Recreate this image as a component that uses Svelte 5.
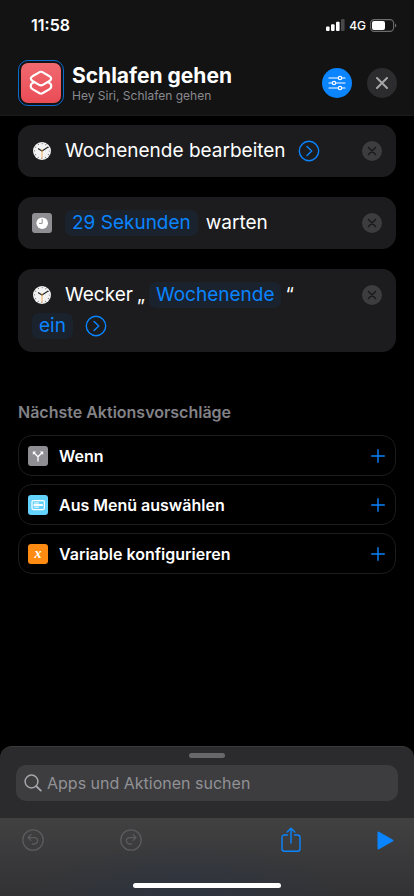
<script lang="ts">
	type Part = { kind: 'text' | 'quote' | 'token' | 'more'; value?: string };
	type Action = { id: number; icon: 'clock' | 'wait'; name: string; parts: Part[] };

	let actions = $state<Action[]>([
		{
			id: 1,
			icon: 'clock',
			name: 'Wochenende bearbeiten',
			parts: [{ kind: 'text', value: 'Wochenende bearbeiten' }, { kind: 'more' }]
		},
		{
			id: 2,
			icon: 'wait',
			name: 'Warten',
			parts: [
				{ kind: 'token', value: '29 Sekunden' },
				{ kind: 'text', value: 'warten' }
			]
		},
		{
			id: 3,
			icon: 'clock',
			name: 'Wecker',
			parts: [
				{ kind: 'text', value: 'Wecker' },
				{ kind: 'quote', value: '„' },
				{ kind: 'token', value: 'Wochenende' },
				{ kind: 'quote', value: '“' },
				{ kind: 'token', value: 'ein' },
				{ kind: 'more' }
			]
		}
	]);

	const suggestions = [
		{ icon: 'branch', label: 'Wenn' },
		{ icon: 'menu', label: 'Aus Menü auswählen' },
		{ icon: 'variable', label: 'Variable konfigurieren' }
	];

	let query = $state('');

	function removeAction(id: number) {
		actions = actions.filter((action) => action.id !== id);
	}
</script>

<div class="screen">
	<header>
		<div class="status">
			<time>11:58</time>
			<div class="signals">
				<svg width="19" height="12" viewBox="0 0 19 12" aria-hidden="true">
					<rect x="0" y="7.5" width="3.6" height="4.5" rx="1" fill="#fff" />
					<rect x="5" y="5.3" width="3.6" height="6.7" rx="1" fill="#fff" />
					<rect x="10" y="2.8" width="3.6" height="9.2" rx="1" fill="#fff" />
					<rect x="15" y="0" width="3.6" height="12" rx="1" fill="#48484a" />
				</svg>
				<span>4G</span>
				<svg width="27" height="13" viewBox="0 0 27 13" aria-hidden="true">
					<rect x="0.6" y="0.6" width="23" height="11.8" rx="3.6" fill="none" stroke="#6c6c6e" stroke-width="1.1" />
					<rect x="2" y="2" width="13" height="9" rx="2" fill="#fff" />
					<path d="M25 4.5c1.8.6 1.8 3.4 0 4z" fill="#6c6c6e" />
				</svg>
			</div>
		</div>
		<div class="title-bar">
			<button class="app-icon" aria-label="Symbol ändern">
				<svg viewBox="0 0 40 40" fill="none" stroke="#fff" stroke-width="2.2" stroke-linejoin="round" stroke-linecap="round">
					<path d="M18.6 9.1q1.4-.7 2.8 0l6.7 3.9q2.1 1.2 2.1 2.6t-2.1 2.6l-6.7 3.9q-1.4.7-2.8 0l-6.7-3.900q-2.1-1.200-2.100-2.600t2.100-2.600z" />
					<path d="M12.600 19.300l-.7.4q-2.100 1.200-2.100 2.600v1.500q0 1.400 2.100 2.600l6.700 3.900q1.400.7 2.800 0l6.700-3.900q2.100-1.200 2.100-2.600v-1.500q0-1.400-2.100-2.600l-.7-.4" />
				</svg>
			</button>
			<div class="heading">
				<h1>Schlafen gehen</h1>
				<p>Hey Siri, Schlafen gehen</p>
			</div>
			<button class="round settings" aria-label="Einstellungen">
				<svg width="18" height="16" viewBox="0 0 18 16" fill="#0a84ff" stroke="#fff" stroke-width="1.2" stroke-linecap="round">
					<path d="M1 3h16M1 8h16M1 13h16" />
					<circle cx="12" cy="3" r="1.7" />
					<circle cx="6" cy="8" r="1.7" />
					<circle cx="12" cy="13" r="1.7" />
				</svg>
			</button>
			<button class="round close" aria-label="Schließen">
				<svg width="12" height="12" viewBox="0 0 12 12" stroke="#a5a5aa" stroke-width="2" stroke-linecap="round">
					<path d="M1 1l10 10M11 1L1 11" />
				</svg>
			</button>
		</div>
	</header>

	<main>
		<div class="actions">
			{#each actions as action (action.id)}
				<section class="card">
					<div class="parts">
						<span class="symbol">
							{#if action.icon === 'clock'}
								<svg width="18" height="18" viewBox="0 0 18 18" fill="none">
									<circle cx="9" cy="9" r="9" fill="#f2f2f2" />
									<circle cx="9" cy="9" r="7.4" stroke="#666" stroke-width="1.2" stroke-dasharray="0.8 3.07" stroke-dashoffset="0.4" />
									<path d="M9 9L5.4 6.7M9 9l5.8-3.8" stroke="#222" stroke-width="1.1" stroke-linecap="round" />
									<path d="M9 7.5v9" stroke="#f0a23c" stroke-width="0.8" />
								</svg>
							{:else}
								<svg width="20" height="20" viewBox="0 0 20 20">
									<rect width="20" height="20" rx="3" fill="#8e8e93" />
									<circle cx="10.2" cy="10.2" r="5.8" fill="#fff" />
									<path d="M10.2 6.2v4.2H7.4" fill="none" stroke="#8e8e93" stroke-width="1" stroke-linecap="round" />
								</svg>
							{/if}
						</span>
						{#each action.parts as part}
							{#if part.kind === 'token'}
								<button class="token">{part.value}</button>
							{:else if part.kind === 'more'}
								<button class="more" aria-label="Mehr anzeigen">
									<svg width="22" height="22" viewBox="0 0 22 22" fill="none" stroke="#0a84ff" stroke-width="1.4" stroke-linecap="round" stroke-linejoin="round">
										<circle cx="11" cy="11" r="9.7" />
										<path d="M9 6.5l4.8 4.5L9 15.5" />
									</svg>
								</button>
							{:else}
								<span class={part.kind}>{part.value}</span>
							{/if}
						{/each}
					</div>
					<button class="remove" aria-label="{action.name} entfernen" onclick={() => removeAction(action.id)}>
						<svg width="20" height="20" viewBox="0 0 20 20">
							<circle cx="10" cy="10" r="10" fill="#3d3d3f" />
							<path d="M6.5 6.5l7 7M13.5 6.5l-7 7" stroke="#1c1c1e" stroke-width="1.7" stroke-linecap="round" />
						</svg>
					</button>
				</section>
			{/each}
		</div>

		<h2>Nächste Aktionsvorschläge</h2>
		<div class="suggestions">
			{#each suggestions as item}
				<button class="suggestion">
					<svg width="20" height="20" viewBox="0 0 20 20" fill="none" aria-hidden="true">
						{#if item.icon === 'branch'}
							<rect width="20" height="20" rx="3" fill="#8e8e93" />
							<path d="M10 15v-4.2L6.2 7M10 10.8L13.8 7" stroke="#fff" stroke-width="1.3" stroke-linecap="round" />
							<path d="M4.8 5.6h3.4L4.8 9zM15.2 5.6h-3.4L15.2 9z" fill="#fff" />
						{:else if item.icon === 'menu'}
							<rect width="20" height="20" rx="3" fill="#64d2ff" />
							<rect x="4" y="5.6" width="12.4" height="9" rx="1.5" stroke="#fff" stroke-width="1.2" />
							<path d="M6 8h5M6 12.2h5" stroke="#fff" stroke-width="0.9" />
							<rect x="5.5" y="9.1" width="9.4" height="2" rx="0.6" fill="#fff" />
						{:else}
							<rect width="20" height="20" rx="3" fill="#ff8c12" />
							<text x="10" y="14" class="variable">x</text>
						{/if}
					</svg>
					<span>{item.label}</span>
					<svg width="14" height="14" viewBox="0 0 14 14" stroke="#0a84ff" stroke-width="1.4" stroke-linecap="round" aria-hidden="true">
						<path d="M7 .7v12.6M.7 7h12.6" />
					</svg>
				</button>
			{/each}
		</div>
	</main>

	<footer>
		<div class="sheet">
			<div class="grabber"></div>
			<label class="search">
				<svg width="18" height="18" viewBox="0 0 18 18" fill="none" stroke="#a5a5ad" stroke-width="1.5" stroke-linecap="round" aria-hidden="true">
					<circle cx="7.5" cy="7.5" r="6.4" />
					<path d="M12.3 12.3l4.5 4.3" stroke-width="1.9" />
				</svg>
				<input type="text" placeholder="Apps und Aktionen suchen" aria-label="Apps und Aktionen suchen" bind:value={query} />
			</label>
		</div>
		<div class="toolbar">
			<button aria-label="Widerrufen" disabled>
				<svg width="22" height="22" viewBox="0 0 22 22" fill="none" stroke="#5b5b5d" stroke-width="1.3" stroke-linecap="round" stroke-linejoin="round">
					<circle cx="11" cy="11" r="10.2" />
					<path d="M8.8 5.8L6 8.6l2.8 2.8M6.2 8.6h6.2a3.1 3.1 0 0 1 0 6.4h-2" />
				</svg>
			</button>
			<button aria-label="Wiederholen" disabled>
				<svg width="22" height="22" viewBox="0 0 22 22" fill="none" stroke="#5b5b5d" stroke-width="1.3" stroke-linecap="round" stroke-linejoin="round">
					<circle cx="11" cy="11" r="10.2" />
					<path d="M13.2 5.8L16 8.6l-2.8 2.8M15.8 8.6H9.6a3.1 3.1 0 0 0 0 6.4h2" />
				</svg>
			</button>
			<button class="share" aria-label="Teilen">
				<svg width="20" height="26" viewBox="0 0 20 26" fill="none" stroke="#0a84ff" stroke-width="1.4" stroke-linecap="round" stroke-linejoin="round">
					<path d="M6.5 8H3.5Q1 8 1 10.5v11.2Q1 24.2 3.5 24.2h13q2.5 0 2.5-2.5V10.5Q19 8 16.5 8h-3M10 16V1.3M6.2 5L10 1.2 13.800 5" />
				</svg>
			</button>
			<button aria-label="Ausführen">
				<svg width="17" height="19" viewBox="0 0 17 19">
					<path d="M1.5 1.5v16l14-8z" fill="#0a84ff" stroke="#0a84ff" stroke-width="2" stroke-linejoin="round" />
				</svg>
			</button>
			<div class="home"></div>
		</div>
	</footer>
</div>

<style>
	:global(body) {
		margin: 0;
		background: #000;
	}

	.screen {
		box-sizing: border-box;
		min-height: 100vh;
		display: flex;
		flex-direction: column;
		background: #000;
		color: #fff;
		font-family: Inter, 'Liberation Sans', sans-serif;
	}

	button {
		padding: 0;
		border: 0;
		background: none;
		color: inherit;
		font: inherit;
	}

	svg {
		display: block;
		flex-shrink: 0;
	}

	header {
		background: #131313;
		border-bottom: 1px solid #1b1b1c;
	}

	.status {
		display: flex;
		justify-content: space-between;
		align-items: center;
		height: 50px;
		padding: 0 17px 0 31px;
	}

	.status time {
		font-size: 16px;
		font-weight: 600;
	}

	.signals {
		display: flex;
		align-items: center;
		gap: 4px;
		font-size: 12px;
		font-weight: 500;
	}

	.title-bar {
		display: flex;
		align-items: center;
		height: 65px;
		padding: 0 17px 0 18px;
	}

	.app-icon {
		box-sizing: border-box;
		flex-shrink: 0;
		width: 46px;
		height: 46px;
		padding: 2px;
		border: 1px solid #0a6bd0;
		border-radius: 10px;
	}

	.app-icon svg {
		border-radius: 7px;
		background: linear-gradient(#f06a70, #ea4c56);
	}

	.heading {
		flex: 1;
		min-width: 0;
		padding: 2px 0 0 8px;
	}

	h1 {
		margin: 0;
		font-size: 21px;
		line-height: 24px;
		font-weight: 700;
	}

	.heading p {
		margin: 0;
		color: #8a8a8f;
		font-size: 12px;
		line-height: 16px;
	}

	.round {
		display: flex;
		align-items: center;
		justify-content: center;
		width: 30px;
		height: 30px;
		border-radius: 50%;
	}

	.settings {
		background: #0a84ff;
	}

	.close {
		margin-left: 15px;
		background: #2c2c2e;
	}

	main {
		flex: 1;
		padding: 9px 18px 24px;
	}

	.actions {
		display: flex;
		flex-direction: column;
		gap: 20px;
	}

	.card {
		display: flex;
		align-items: flex-start;
		padding: 11px 14px;
		border-radius: 14px;
		background: #1c1c1e;
		font-size: 19px;
		line-height: 26px;
	}

	.parts {
		flex: 1;
		display: flex;
		flex-wrap: wrap;
		align-items: center;
		row-gap: 5px;
		padding: 2px 36px 2px 0;
	}

	.symbol {
		display: flex;
		align-items: center;
		justify-content: center;
		width: 20px;
		margin-right: 13px;
	}

	.token {
		padding: 0 7px;
		border-radius: 7px;
		background: #1a222d;
		color: #0a84ff;
	}

	.token + .text {
		margin-left: 8px;
	}

	.quote {
		margin: 0 4px;
	}

	.more {
		margin-left: 12px;
	}

	.remove {
		margin: 5px 0;
	}

	h2 {
		margin: 49px 0 12px;
		color: #828287;
		font-size: 16px;
		line-height: 22px;
		font-weight: 600;
	}

	.suggestions {
		display: flex;
		flex-direction: column;
		gap: 8px;
	}

	.suggestion {
		box-sizing: border-box;
		display: flex;
		align-items: center;
		gap: 11px;
		height: 41px;
		padding: 0 10px 0 9px;
		border: 1px solid #1c1c1e;
		border-radius: 14px;
		text-align: left;
		font-size: 16px;
		font-weight: 600;
	}

	.suggestion span {
		flex: 1;
	}

	.variable {
		fill: #fff;
		font: italic bold 14px 'Liberation Serif', serif;
		text-anchor: middle;
	}

	.sheet {
		padding: 6px 16px 17px;
		border-top: 1px solid #3a3a3c;
		border-radius: 12px 12px 0 0;
		background: #2b2b2d;
	}

	.grabber {
		width: 36px;
		height: 5px;
		margin: 0 auto 7px;
		border-radius: 3px;
		background: #68686b;
	}

	.search {
		display: flex;
		align-items: center;
		gap: 5px;
		height: 36px;
		padding: 0 8px;
		border-radius: 10px;
		background: #3d3d3f;
	}

	.search input {
		flex: 1;
		min-width: 0;
		padding: 0;
		border: 0;
		outline: 0;
		background: none;
		color: #fff;
		font: inherit;
		font-size: 16px;
	}

	.search input::placeholder {
		color: #919196;
		opacity: 1;
	}

	.toolbar {
		position: relative;
		box-sizing: border-box;
		display: flex;
		align-items: center;
		gap: 76px;
		height: 78px;
		padding: 0 20px 34px 22px;
		background:
			radial-gradient(ellipse at 45% 110%, rgba(44, 52, 66, 0.9), transparent 50%),
			linear-gradient(#414142, #323234);
	}

	.share {
		margin-left: auto;
	}

	.home {
		position: absolute;
		bottom: 8px;
		left: 50%;
		width: 148px;
		height: 5px;
		margin-left: -74px;
		border-radius: 3px;
		background: #fff;
	}
</style>
